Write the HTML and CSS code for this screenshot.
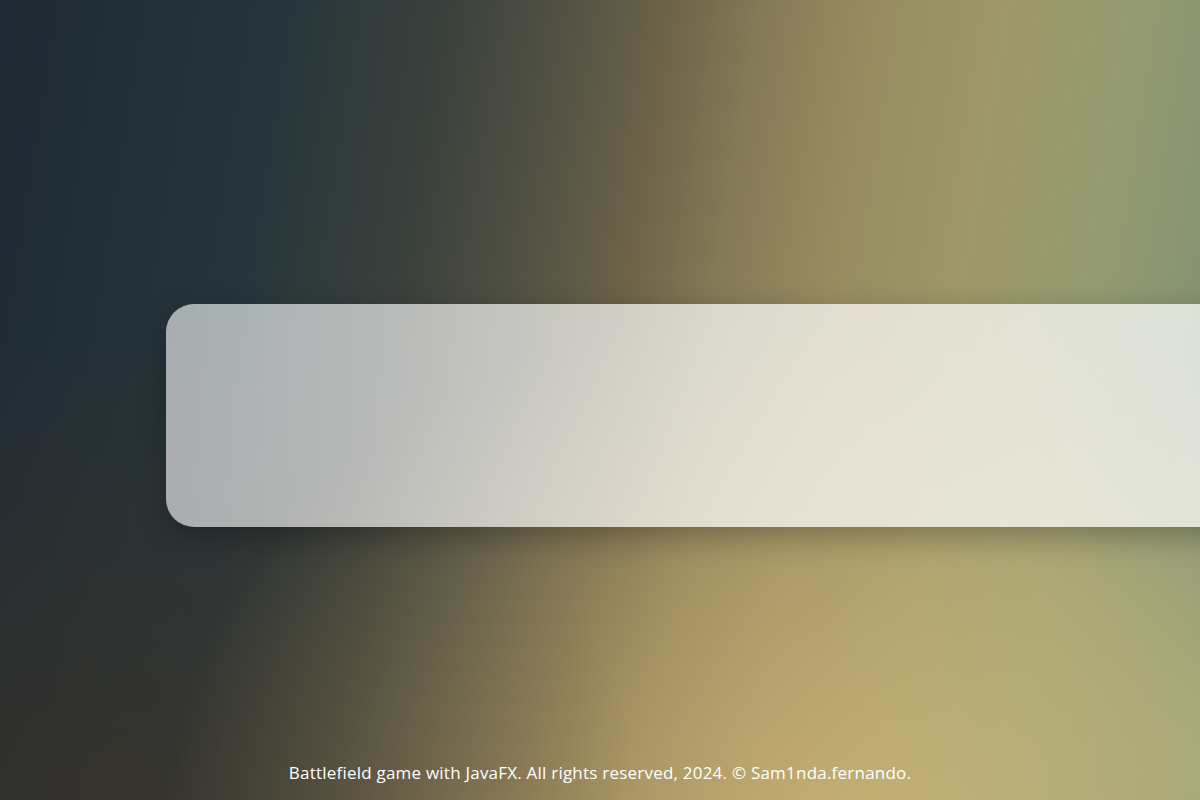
FILE: index.html
```html
<!DOCTYPE html>
<html lang="en">
<head>
<meta charset="utf-8">
<title>Battlefield</title>
<link rel="stylesheet" href="styles.css">
</head>
<body>
<div class="page">
  <main class="stage">
    <section class="panel"></section>
  </main>
  <footer class="footer">Battlefield game with JavaFX. All rights reserved, 2024. © Sam1nda.fernando.</footer>
</div>
</body>
</html>
```
FILE: styles.css
```css
html, body {
  margin: 0;
  padding: 0;
  width: 1200px;
  height: 800px;
  overflow: hidden;
}
.page {
  width: 1200px;
  height: 800px;
  display: flex;
  flex-direction: column;
  background:
    radial-gradient(ellipse 420px 360px at 1200px 760px, rgba(190,186,130,0.45), rgba(190,186,130,0) 100%),
    radial-gradient(ellipse 700px 540px at 860px 830px, rgba(212,184,118,0.72), rgba(212,184,118,0) 100%),
    radial-gradient(ellipse 520px 480px at 120px 820px, rgba(58,50,40,0.8), rgba(58,50,40,0) 100%),
    linear-gradient(99deg, #1e2933 0%, #27363b 22%, #3b413c 34%, #535244 43%, #6e6449 51%, #877b57 58%, #978b62 66%, #9d9769 76%, #949a70 86%, #7b8e74 100%);
  font-family: "Open Sans", "Liberation Sans", sans-serif;
}
.stage {
  flex: 1;
  padding: 304px 0 0 166px;
  display: flex;
  align-items: flex-start;
  overflow: hidden;
}
.panel {
  flex: none;
  width: 1100px;
  height: 223px;
  border-radius: 28px;
  background: linear-gradient(90deg, rgba(255,255,255,0.6), rgba(255,255,255,0.7) 50%, rgba(255,255,255,0.72));
  box-shadow: 0 10px 30px rgba(0,0,0,0.28);
}
.footer {
  text-align: center;
  color: #ffffff;
  font-size: 17px;
  letter-spacing: 0.22px;
  line-height: 22px;
  padding-bottom: 16px;
}
```
